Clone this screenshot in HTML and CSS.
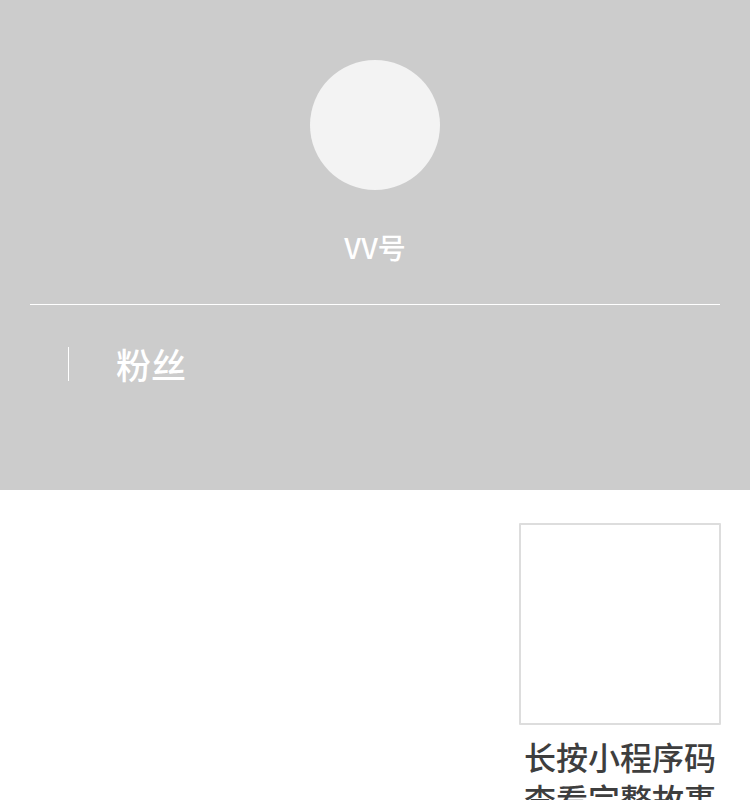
FILE: index.html
```html
<!DOCTYPE html>
<html lang="zh-CN">
<head>
<meta charset="utf-8">
<title>VV号</title>
<link rel="stylesheet" href="styles.css">
</head>
<body>
<header class="profile">
  <div class="avatar"></div>
  <h1 class="account">VV号</h1>
  <div class="stats">
    <span class="stat">粉丝</span>
  </div>
</header>
<main class="content">
  <aside class="share">
    <div class="code"></div>
    <p class="hint">长按小程序码<br>查看完整故事</p>
  </aside>
</main>
</body>
</html>
```
FILE: styles.css
```css
* {
  box-sizing: border-box;
}

html {
  overflow: hidden;
}

body {
  margin: 0;
  background: #fff;
  color: #3e3e3e;
  font-family: "Noto Sans CJK SC", sans-serif;
}

.profile {
  display: flex;
  flex-direction: column;
  align-items: center;
  min-height: 490px;
  padding: 60px 30px 0;
  background: #ccc;
  color: #fff;
}

.avatar {
  width: 130px;
  height: 130px;
  border-radius: 50%;
  background: #f3f3f3;
}

.account {
  margin: 36px 0;
  font-size: 28px;
  font-weight: 500;
  line-height: 42px;
}

.stats {
  align-self: stretch;
  display: flex;
  padding: 42px 38px;
  border-top: 1px solid #fff;
}

.stat {
  padding-left: 47px;
  border-left: 1px solid #fff;
  font-size: 35px;
  font-weight: 500;
  line-height: 34px;
}

.content {
  display: flex;
  justify-content: flex-end;
  padding: 33px 29px 0;
}

.share {
  width: 202px;
}

.code {
  aspect-ratio: 1;
  border: 2px solid #ddd;
  border-radius: 1px;
}

.hint {
  margin: 10px 0 0;
  font-size: 32px;
  font-weight: 500;
  line-height: 42px;
  text-align: center;
}
```
